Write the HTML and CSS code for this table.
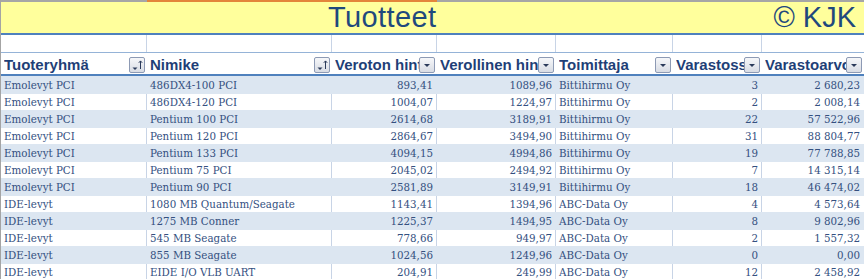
FILE: index.html
```html
<!DOCTYPE html>
<html>
<head>
<meta charset="utf-8">
<link rel="stylesheet" href="styles.css">
</head>
<body>
<div class="sheet">
  <div class="topbar"><span class="tb-gray a"></span><span class="tb-orange"></span><span class="tb-gray b"></span></div>
  <div class="title-row">
    <span class="title">Tuotteet</span>
    <span class="copy">© KJK</span>
  </div>
  <div class="row blank">
    <div class="c c1"></div><div class="c c2"></div><div class="c c3"></div><div class="c c4"></div><div class="c c5"></div><div class="c c6"></div><div class="c c7"></div>
  </div>
  <div class="row head">
    <div class="c c1"><span class="ht">Tuoteryhmä</span><span class="btn"><svg width="16" height="16" viewBox="0 0 16 16"><path d="M3.5 10.5h5l-2.5 2.5z" fill="#2a3a5a"/><path d="M11.5 4v8M9.8 5.8l1.7-1.9 1.7 1.9" stroke="#2a3a5a" stroke-width="1" fill="none"/></svg></span></div>
    <div class="c c2"><span class="ht">Nimike</span><span class="btn"><svg width="16" height="16" viewBox="0 0 16 16"><path d="M3.5 10.5h5l-2.5 2.5z" fill="#2a3a5a"/><path d="M11.5 4v8M9.8 5.8l1.7-1.9 1.7 1.9" stroke="#2a3a5a" stroke-width="1" fill="none"/></svg></span></div>
    <div class="c c3"><span class="ht">Veroton hinta</span><span class="btn"><svg width="16" height="16" viewBox="0 0 16 16"><path d="M5 7h6l-3 3z" fill="#2a3a5a"/></svg></span></div>
    <div class="c c4"><span class="ht">Verollinen hinta</span><span class="btn"><svg width="16" height="16" viewBox="0 0 16 16"><path d="M5 7h6l-3 3z" fill="#2a3a5a"/></svg></span></div>
    <div class="c c5"><span class="ht">Toimittaja</span><span class="btn"><svg width="16" height="16" viewBox="0 0 16 16"><path d="M5 7h6l-3 3z" fill="#2a3a5a"/></svg></span></div>
    <div class="c c6"><span class="ht">Varastossa</span><span class="btn"><svg width="16" height="16" viewBox="0 0 16 16"><path d="M5 7h6l-3 3z" fill="#2a3a5a"/></svg></span></div>
    <div class="c c7"><span class="ht">Varastoarvo</span><span class="btn"><svg width="16" height="16" viewBox="0 0 16 16"><path d="M5 7h6l-3 3z" fill="#2a3a5a"/></svg></span></div>
  </div>
  <div class="rows">
    <div class="row s"><div class="c c1">Emolevyt PCI</div><div class="c c2">486DX4-100 PCI</div><div class="c c3 n">893,41</div><div class="c c4 n">1089,96</div><div class="c c5">Bittihirmu Oy</div><div class="c c6 n">3</div><div class="c c7 n">2 680,23</div></div>
    <div class="row w"><div class="c c1">Emolevyt PCI</div><div class="c c2">486DX4-120 PCI</div><div class="c c3 n">1004,07</div><div class="c c4 n">1224,97</div><div class="c c5">Bittihirmu Oy</div><div class="c c6 n">2</div><div class="c c7 n">2 008,14</div></div>
    <div class="row s"><div class="c c1">Emolevyt PCI</div><div class="c c2">Pentium 100 PCI</div><div class="c c3 n">2614,68</div><div class="c c4 n">3189,91</div><div class="c c5">Bittihirmu Oy</div><div class="c c6 n">22</div><div class="c c7 n">57 522,96</div></div>
    <div class="row w"><div class="c c1">Emolevyt PCI</div><div class="c c2">Pentium 120 PCI</div><div class="c c3 n">2864,67</div><div class="c c4 n">3494,90</div><div class="c c5">Bittihirmu Oy</div><div class="c c6 n">31</div><div class="c c7 n">88 804,77</div></div>
    <div class="row s"><div class="c c1">Emolevyt PCI</div><div class="c c2">Pentium 133 PCI</div><div class="c c3 n">4094,15</div><div class="c c4 n">4994,86</div><div class="c c5">Bittihirmu Oy</div><div class="c c6 n">19</div><div class="c c7 n">77 788,85</div></div>
    <div class="row w"><div class="c c1">Emolevyt PCI</div><div class="c c2">Pentium 75 PCI</div><div class="c c3 n">2045,02</div><div class="c c4 n">2494,92</div><div class="c c5">Bittihirmu Oy</div><div class="c c6 n">7</div><div class="c c7 n">14 315,14</div></div>
    <div class="row s"><div class="c c1">Emolevyt PCI</div><div class="c c2">Pentium 90 PCI</div><div class="c c3 n">2581,89</div><div class="c c4 n">3149,91</div><div class="c c5">Bittihirmu Oy</div><div class="c c6 n">18</div><div class="c c7 n">46 474,02</div></div>
    <div class="row w"><div class="c c1">IDE-levyt</div><div class="c c2">1080 MB Quantum/Seagate</div><div class="c c3 n">1143,41</div><div class="c c4 n">1394,96</div><div class="c c5">ABC-Data Oy</div><div class="c c6 n">4</div><div class="c c7 n">4 573,64</div></div>
    <div class="row s"><div class="c c1">IDE-levyt</div><div class="c c2">1275 MB Conner</div><div class="c c3 n">1225,37</div><div class="c c4 n">1494,95</div><div class="c c5">ABC-Data Oy</div><div class="c c6 n">8</div><div class="c c7 n">9 802,96</div></div>
    <div class="row w"><div class="c c1">IDE-levyt</div><div class="c c2">545 MB Seagate</div><div class="c c3 n">778,66</div><div class="c c4 n">949,97</div><div class="c c5">ABC-Data Oy</div><div class="c c6 n">2</div><div class="c c7 n">1 557,32</div></div>
    <div class="row s"><div class="c c1">IDE-levyt</div><div class="c c2">855 MB Seagate</div><div class="c c3 n">1024,56</div><div class="c c4 n">1249,96</div><div class="c c5">ABC-Data Oy</div><div class="c c6 n">0</div><div class="c c7 n">0,00</div></div>
    <div class="row w"><div class="c c1">IDE-levyt</div><div class="c c2">EIDE I/O VLB UART</div><div class="c c3 n">204,91</div><div class="c c4 n">249,99</div><div class="c c5">ABC-Data Oy</div><div class="c c6 n">12</div><div class="c c7 n">2 458,92</div></div>
  </div>
</div>
</body>
</html>
```
FILE: styles.css
```css
html, body {
  margin: 0;
  padding: 0;
  background: #ffffff;
  overflow: hidden;
}
.sheet {
  width: 864px;
  height: 279px;
  overflow: hidden;
  box-sizing: border-box;
  border-left: 1px solid #a4a4a4;
}
.topbar {
  display: flex;
  height: 2px;
}
.tb-gray { background: #a6a6a6; }
.tb-gray.a { width: 146px; }
.tb-gray.b { flex: 1; }
.tb-orange { width: 290px; background: #e3853b; }

.title-row {
  height: 31px;
  background: #ffff9c;
  border-bottom: 2px solid #4f81bd;
  display: flex;
  align-items: center;
  justify-content: space-between;
  padding: 0 8px 0 327px;
  font-family: "Liberation Sans", Arial, sans-serif;
  font-size: 29px;
  color: #1f497d;
  line-height: 31px;
}
.title { letter-spacing: 0.4px; }

.row {
  display: flex;
  box-sizing: border-box;
}
.c {
  box-sizing: border-box;
  border-right: 1px solid #c8d4e6;
  overflow: hidden;
  white-space: nowrap;
  padding: 0 3px;
  flex: none;
}
.c1 { width: 146px; }
.c2 { width: 185px; }
.c3 { width: 105px; }
.c4 { width: 119px; }
.c5 { width: 117px; }
.c6 { width: 89px; }
.c7 { width: 101px; border-right: none; }

.blank {
  height: 18px;
  border-bottom: 1px solid #95b3d7;
}
.head {
  height: 23px;
  border-bottom: 2px solid #4f81bd;
}
.head .c {
  display: flex;
  align-items: center;
  justify-content: space-between;
  padding: 0 1px 0 3px;
  border-right-color: #ffffff;
  font-family: "Liberation Sans", Arial, sans-serif;
  font-weight: bold;
  font-size: 15px;
  color: #1f3f77;
}
.ht {
  overflow: hidden;
  white-space: nowrap;
  flex: 1;
  min-width: 0;
  padding-top: 1px;
}
.btn {
  flex: none;
  width: 16px;
  height: 16px;
  box-sizing: border-box;
  border: 1px solid #8d9ab4;
  border-radius: 2px;
  background: linear-gradient(#f6f7f9, #d8dce4);
  display: flex;
  align-items: center;
  justify-content: center;
  margin-top: 2px;
}
.btn svg { display: block; margin: -1px; }

.rows .row {
  font-family: "DejaVu Serif", "Liberation Serif", serif;
  font-size: 10.3px;
  color: #34507f;
}
.rows .row .c {
  display: flex;
  align-items: center;
}
.rows .row.s {
  height: 18px;
  background: #dce6f1;
}
.rows .row.s .c { border-right-color: #dce6f1; }
.rows .row.w {
  height: 16px;
  background: #ffffff;
}
.c.n { justify-content: flex-end; }
```
